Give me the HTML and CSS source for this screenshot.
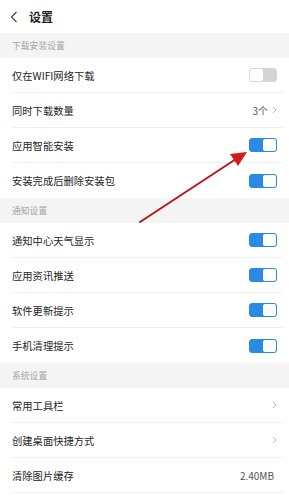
FILE: index.html
```html
<!DOCTYPE html>
<html lang="zh">
<head>
<meta charset="utf-8">
<link rel="stylesheet" href="styles.css">
</head>
<body>
<div class="page">
  <header class="topbar">
    <svg class="back" width="8" height="12" viewBox="0 0 8 12"><polyline points="6.5,1 1.5,6 6.5,11" fill="none" stroke="#444" stroke-width="1.2"/></svg>
    <span class="title">设置</span>
  </header>

  <div class="section">下载安装设置</div>
  <div class="row"><span class="label">仅在WIFI网络下载</span><span class="toggle off"></span></div>
  <div class="row"><span class="label">同时下载数量</span><span class="value">3个<svg class="chev" width="5" height="8" viewBox="0 0 5 8"><polyline points="1,1 4,4 1,7" fill="none" stroke="#bbb" stroke-width="1"/></svg></span></div>
  <div class="row"><span class="label">应用智能安装</span><span class="toggle on"></span></div>
  <div class="row last"><span class="label">安装完成后删除安装包</span><span class="toggle on"></span></div>

  <div class="section">通知设置</div>
  <div class="row"><span class="label">通知中心天气显示</span><span class="toggle on"></span></div>
  <div class="row"><span class="label">应用资讯推送</span><span class="toggle on"></span></div>
  <div class="row"><span class="label">软件更新提示</span><span class="toggle on"></span></div>
  <div class="row last"><span class="label">手机清理提示</span><span class="toggle on"></span></div>

  <div class="section">系统设置</div>
  <div class="row"><span class="label">常用工具栏</span><span class="value"><svg class="chev" width="5" height="8" viewBox="0 0 5 8"><polyline points="1,1 4,4 1,7" fill="none" stroke="#bbb" stroke-width="1"/></svg></span></div>
  <div class="row"><span class="label">创建桌面快捷方式</span><span class="value"><svg class="chev" width="5" height="8" viewBox="0 0 5 8"><polyline points="1,1 4,4 1,7" fill="none" stroke="#bbb" stroke-width="1"/></svg></span></div>
  <div class="row"><span class="label">清除图片缓存</span><span class="value size">2.40MB</span></div>

  <svg class="arrow" width="289" height="500" viewBox="0 0 289 500">
    <line x1="140" y1="222" x2="236" y2="159" stroke="#b8161a" stroke-width="2" stroke-linecap="round"/>
    <polygon points="247,152 230,154 238,166" fill="#d41a1c"/>
  </svg>
</div>
</body>
</html>
```

FILE: styles.css
```css
html, body {
  margin: 0;
  padding: 0;
  background: #fff;
}
.page {
  position: relative;
  width: 289px;
  height: 500px;
  overflow: hidden;
  font-family: "Noto Sans CJK SC", "Noto Sans", sans-serif;
  color: #333;
}
.topbar {
  height: 33px;
  display: flex;
  align-items: center;
  padding-left: 10px;
  box-sizing: border-box;
}
.back {
  display: block;
  margin-top: 1px;
}
.title {
  margin-left: 11px;
  font-size: 12px;
  font-weight: 600;
  color: #222;
}
.section {
  height: 25px;
  background: #f4f4f4;
  display: flex;
  align-items: center;
  padding-left: 12px;
  font-size: 8.8px;
  color: #a5a5a5;
}
.row {
  height: 35px;
  box-sizing: border-box;
  margin: 0 6px 0 12px;
  padding-right: 6px;
  display: flex;
  align-items: center;
  justify-content: space-between;
  border-bottom: 1px solid #efefef;
}
.row.last {
  border-bottom: none;
}
.label {
  font-size: 10.3px;
  color: #262626;
}
.value {
  display: flex;
  align-items: center;
  font-size: 10px;
  color: #555;
  gap: 4px;
}
.value.size {
  margin-right: 3px;
}
.chev {
  display: block;
}
.toggle {
  width: 28px;
  height: 14px;
  border-radius: 3px;
  box-sizing: border-box;
  position: relative;
}
.toggle.off {
  background: #d4d4d4;
  border: 1px solid #d8d8d8;
}
.toggle.off::after {
  content: "";
  position: absolute;
  left: 0;
  top: 0;
  width: 13px;
  height: 12px;
  background: #fff;
  border-radius: 2px;
}
.toggle.on {
  background: #2b8ae4;
  border: 1px solid #2b8ae4;
}
.toggle.on::after {
  content: "";
  position: absolute;
  right: 0;
  top: 0;
  width: 13px;
  height: 12px;
  background: #fff;
  border-radius: 2px;
}
.arrow {
  position: absolute;
  left: 0;
  top: 0;
  pointer-events: none;
}
```
